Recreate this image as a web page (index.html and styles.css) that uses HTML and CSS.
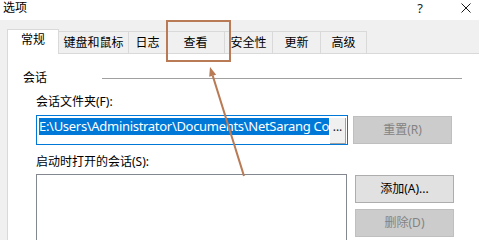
FILE: index.html
```html
<!DOCTYPE html>
<html lang="zh-CN">
  <head>
    <meta charset="UTF-8" />
    <title>选项</title>
    <link rel="stylesheet" href="styles.css">
  </head>
  <body>
    <div class="dialog">
      <div class="titlebar">
        <span class="title">选项</span>
        <span class="help">?</span>
        <svg class="close" width="10" height="10" viewBox="0 0 10 10">
          <path d="M0.5 0.5 L9.5 9.5 M9.5 0.5 L0.5 9.5" stroke="#1a1a1a" stroke-width="1" fill="none" />
        </svg>
      </div>
      <div class="client">
        <div class="tabs">
          <div class="tab active w1">常规</div>
          <div class="tab w2">键盘和鼠标</div>
          <div class="tab w3">日志</div>
          <div class="tab w4">查看</div>
          <div class="tab w5">安全性</div>
          <div class="tab w5">更新</div>
          <div class="tab w6">高级</div>
        </div>
        <div class="panel">
          <div class="group-head">
            <span>会话</span>
            <span class="rule"></span>
          </div>
          <div class="section">
            <div class="label">会话文件夹(F):</div>
            <div class="row">
              <div class="path">
                <div class="field"><span class="sel">E:\Users\Administrator\Documents\NetSarang Co</span></div>
                <div class="browse">...</div>
              </div>
              <div class="btn disabled reset">重置(R)</div>
            </div>
            <div class="label gap">启动时打开的会话(S):</div>
            <div class="row">
              <div class="list"></div>
              <div class="side">
                <div class="btn">添加(A)...</div>
                <div class="btn disabled">删除(D)</div>
              </div>
            </div>
          </div>
        </div>
      </div>
      <!-- annotation drawn over the dialog -->
      <svg class="annot" width="479" height="240" viewBox="0 0 479 240">
        <rect x="167" y="21" width="63" height="40" fill="none" stroke="#b97a56" stroke-width="2" />
        <line x1="244" y1="176" x2="212.7" y2="75.6" stroke="#b97a56" stroke-width="2" />
        <polygon points="210,67 216.2,74.8 209.2,76.8" fill="#b97a56" />
      </svg>
    </div>
  </body>
</html>
```

FILE: styles.css
```css
* {
  margin: 0;
  padding: 0;
  box-sizing: border-box;
}
body {
  font-family: "Noto Sans", "Noto Sans CJK SC", sans-serif;
  font-size: 12px;
  color: #000;
  background: #f0f0f0;
}
.dialog {
  position: relative;
  width: 479px;
  height: 240px;
  overflow: hidden;
  background: #f0f0f0;
}
.titlebar {
  height: 20px;
  background: #fff;
  display: flex;
  align-items: flex-start;
  padding-left: 3px;
  line-height: 16px;
}
.help {
  margin-left: auto;
  font-size: 13px;
  color: #1a1a1a;
}
.close {
  margin: 3px 8px 0 38px;
}
.client {
  height: 220px;
  padding: 9px 0 0 7px;
  display: flex;
  flex-direction: column;
}
.tabs {
  display: flex;
  align-items: flex-end;
  height: 25px;
  margin-bottom: -1px;
  position: relative;
  z-index: 1;
}
.tab {
  height: 23px;
  line-height: 20px;
  padding-top: 1px;
  text-align: center;
  border-top: 1px solid #d9d9d9;
  border-right: 1px solid #d9d9d9;
  white-space: nowrap;
}
.tab.active {
  height: 25px;
  padding-top: 0;
  background: #fff;
  border-left: 1px solid #d9d9d9;
}
.w1 { width: 52px; }
.w2 { width: 70px; }
.w3 { width: 38px; }
.w4 { width: 58px; }
.w5 { width: 48px; }
.w6 { width: 46px; }
.panel {
  flex: 1;
  background: #fff;
  border-top: 1px solid #d9d9d9;
  border-left: 1px solid #d9d9d9;
  padding: 16px 0 0 15px;
}
.group-head {
  display: flex;
  align-items: center;
  height: 16px;
  line-height: 16px;
}
.rule {
  width: 360px;
  height: 1px;
  background: #a0a0a0;
  margin-left: 55px;
}
.section {
  padding-left: 13px;
}
.label {
  line-height: 16px;
  margin-top: 8px;
}
.label.gap {
  margin-top: 9px;
}
.row {
  display: flex;
  align-items: flex-start;
  margin-top: 5px;
}
.label.gap + .row {
  margin-top: 4px;
}
.path {
  width: 312px;
  height: 30px;
  border: 1px solid #0078d7;
  display: flex;
  padding: 2px 1px 0 2px;
}
.field {
  flex: 1;
  overflow: hidden;
  white-space: nowrap;
}
.sel {
  display: inline-block;
  height: 17px;
  line-height: 17px;
  font-size: 13px;
  letter-spacing: -0.3px;
  background: #0078d7;
  color: #fff;
}
.browse {
  width: 16px;
  background: #f0f0f0;
  border-right: 1px solid #a0a0a0;
  border-bottom: 1px solid #a0a0a0;
  text-align: center;
  line-height: 18px;
  font-size: 12px;
  color: #1a1a1a;
}
.btn {
  width: 99px;
  height: 28px;
  line-height: 26px;
  text-align: center;
  background: #e1e1e1;
  border: 1px solid #adadad;
}
.btn.disabled {
  background: #cccccc;
  border-color: #bfbfbf;
  color: #838383;
}
.reset {
  margin: 1px 0 0 5px;
}
.list {
  width: 311px;
  height: 80px;
  border: 1px solid #828790;
  background: #fff;
}
.side {
  display: flex;
  flex-direction: column;
  gap: 6px;
  margin: 1px 0 0 8px;
}
.annot {
  position: absolute;
  left: 0;
  top: 0;
  pointer-events: none;
  z-index: 2;
}
```
